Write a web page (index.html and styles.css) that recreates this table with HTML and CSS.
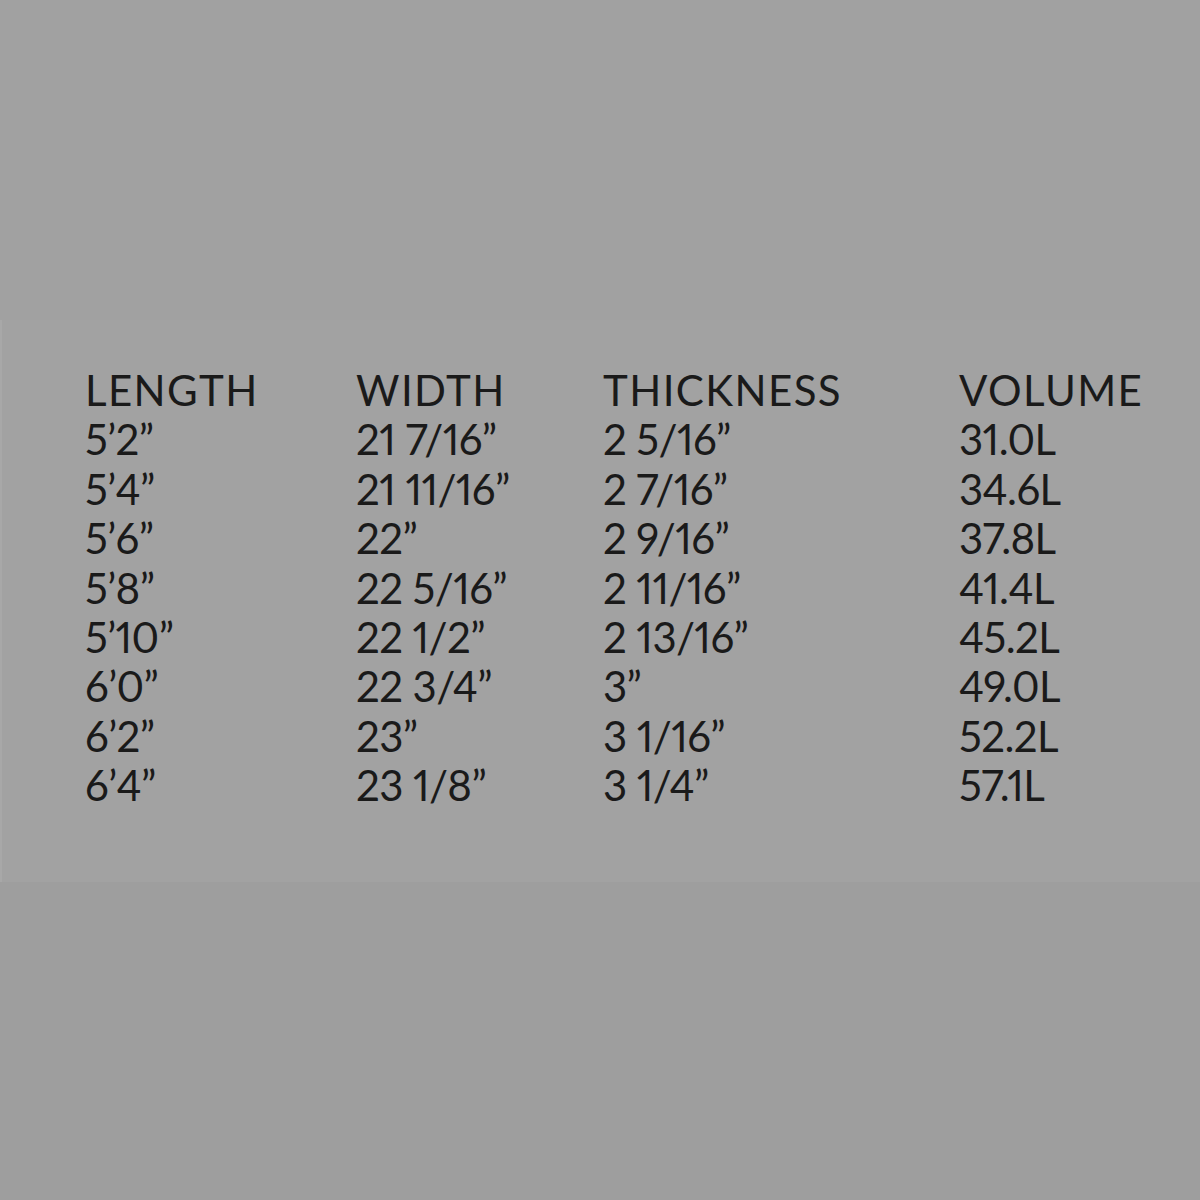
FILE: index.html
```html
<!DOCTYPE html>
<html>
<head>
<meta charset="utf-8">
<link rel="stylesheet" href="styles.css">
</head>
<body>
<div class="top"></div>
<div class="band">
  <div class="table">
    <div class="col c1">
      <div class="head">LENGTH</div>
      <div>5’2”</div><div>5’4”</div><div>5’6”</div><div>5’8”</div>
      <div>5’10”</div><div>6’0”</div><div>6’2”</div><div>6’4”</div>
    </div>
    <div class="col c2">
      <div class="head">WIDTH</div>
      <div>21 7/16”</div><div>21 11/16”</div><div>22”</div><div>22 5/16”</div>
      <div>22 1/2”</div><div>22 3/4”</div><div>23”</div><div>23 1/8”</div>
    </div>
    <div class="col c3">
      <div class="head">THICKNESS</div>
      <div>2 5/16”</div><div>2 7/16”</div><div>2 9/16”</div><div>2 11/16”</div>
      <div>2 13/16”</div><div>3”</div><div>3 1/16”</div><div>3 1/4”</div>
    </div>
    <div class="col c4">
      <div class="head">VOLUME</div>
      <div>31.0L</div><div>34.6L</div><div>37.8L</div><div>41.4L</div>
      <div>45.2L</div><div>49.0L</div><div>52.2L</div><div>57.1L</div>
    </div>
  </div>
</div>
<div class="bottom"></div>
</body>
</html>
```
FILE: styles.css
```css
html, body {
  margin: 0;
  padding: 0;
  width: 1200px;
  height: 1200px;
  background: #9e9e9e;
  overflow: hidden;
}
.top {
  height: 320px;
  background: #a1a1a1;
}
.band {
  height: 562px;
  background: #a2a2a2;
  border-left: 2px solid #a8a8a8;
  box-sizing: border-box;
}
.table {
  display: grid;
  grid-template-columns: 271px 247px 356px 1fr;
  padding: 46px 0 0 83px;
  font-family: "Lato", sans-serif;
  font-weight: 400;
  font-size: 42px;
  line-height: 49.4px;
  color: #1a1a1a;
  letter-spacing: -0.6px;
  font-variant-numeric: proportional-nums;
  font-feature-settings: "pnum" 1;
}
.head {
  letter-spacing: 1.4px;
}
```
